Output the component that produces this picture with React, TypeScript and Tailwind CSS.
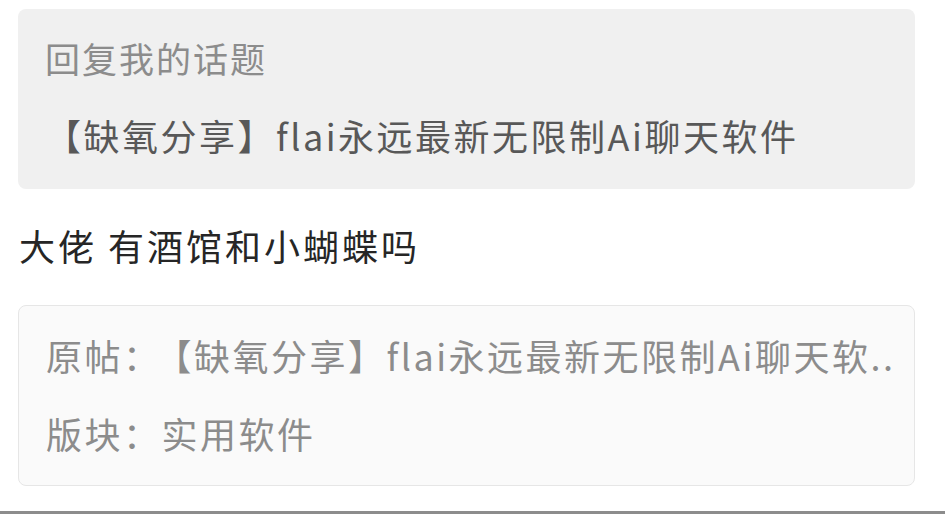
const font = { fontFamily: '"Noto Sans CJK SC", "Noto Sans", sans-serif' }

export default function App() {
  return (
    <div className="w-full h-[514px] bg-white flex flex-col overflow-hidden" style={font}>
      <div className="flex-1 flex flex-col pl-[18px] pr-[30px]">
        {/* 回复的话题 */}
        <div className="mt-[9px] h-[180px] rounded-lg bg-[#f0f0f0] px-[27px] pt-[29px]">
          <div className="h-[40px] leading-[40px] text-[35px] tracking-[2px] text-[#8c8c8c]">回复我的话题</div>
          <div className="mt-[35px] h-[44px] leading-[44px] text-[36px] tracking-[2.5px] text-[#585858] whitespace-nowrap">
            【缺氧分享】flai永远最新无限制Ai聊天软件
          </div>
        </div>

        {/* 回复内容 */}
        <div className="mt-[34px] h-[44px] leading-[44px] text-[36px] tracking-[3px] text-[#262626] pl-[1px]">
          大佬 有酒馆和小蝴蝶吗
        </div>

        {/* 原帖信息 */}
        <div className="mt-[38px] h-[181px] rounded-lg border border-[#e6e6e6] bg-[#fafafa] pl-[27px] pr-[12px] pt-[29px]">
          <div className="h-[40px] leading-[40px] text-[36px] tracking-[2.5px] text-[#8c8c8c] whitespace-nowrap">
            原帖：<span className="ml-[12px]">【缺氧分享】flai永远最新无限制Ai聊天软..</span>
          </div>
          <div className="mt-[36px] h-[44px] leading-[44px] text-[36px] tracking-[2.5px] text-[#8c8c8c]">
            版块：实用软件
          </div>
        </div>
      </div>
      <div className="h-[3px] bg-[#8c8c8c]" />
    </div>
  )
}
